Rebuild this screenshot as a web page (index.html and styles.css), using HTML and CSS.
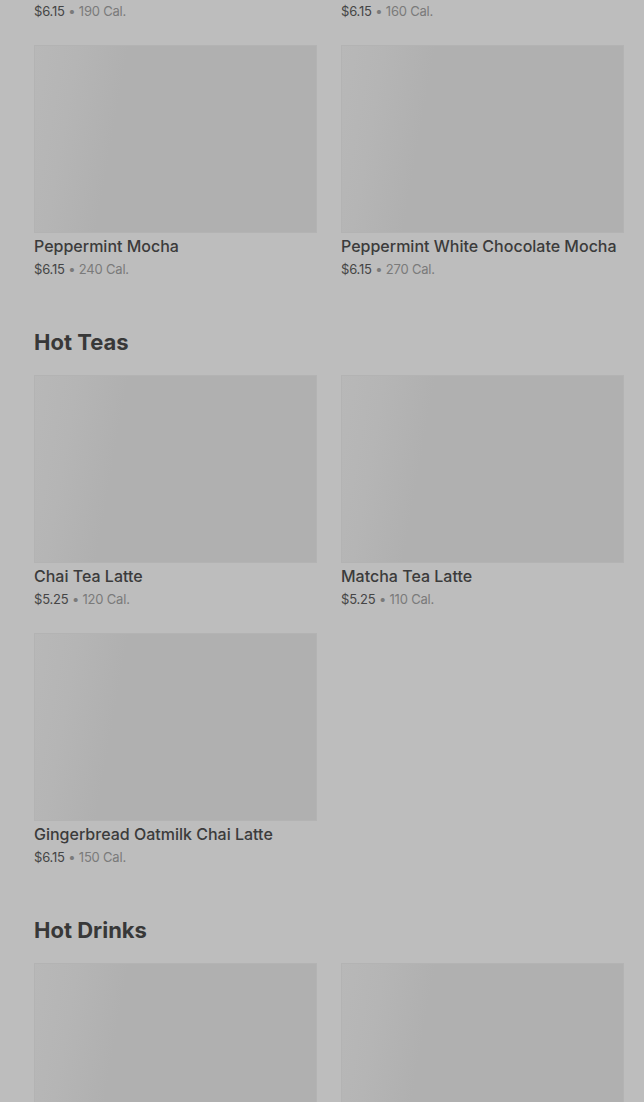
FILE: index.html
```html
<!DOCTYPE html>
<html lang="en">
<head>
<meta charset="utf-8">
<title>Menu</title>
<link rel="stylesheet" href="styles.css">
</head>
<body>
<main class="menu">
  <section class="section section-first">
    <div class="grid">
      <div class="card">
        <div class="thumb"></div>
        <div class="name">Caffè Mocha</div>
        <div class="meta"><span class="price">$6.15</span> • 190 Cal.</div>
      </div>
      <div class="card">
        <div class="thumb"></div>
        <div class="name">White Chocolate Mocha</div>
        <div class="meta"><span class="price">$6.15</span> • 160 Cal.</div>
      </div>
      <div class="card">
        <div class="thumb"></div>
        <div class="name">Peppermint Mocha</div>
        <div class="meta"><span class="price">$6.15</span> • 240 Cal.</div>
      </div>
      <div class="card">
        <div class="thumb"></div>
        <div class="name">Peppermint White Chocolate Mocha</div>
        <div class="meta"><span class="price">$6.15</span> • 270 Cal.</div>
      </div>
    </div>
  </section>

  <section class="section">
    <h2 class="heading">Hot Teas</h2>
    <div class="grid">
      <div class="card">
        <div class="thumb"></div>
        <div class="name">Chai Tea Latte</div>
        <div class="meta"><span class="price">$5.25</span> • 120 Cal.</div>
      </div>
      <div class="card">
        <div class="thumb"></div>
        <div class="name">Matcha Tea Latte</div>
        <div class="meta"><span class="price">$5.25</span> • 110 Cal.</div>
      </div>
      <div class="card">
        <div class="thumb"></div>
        <div class="name">Gingerbread Oatmilk Chai Latte</div>
        <div class="meta"><span class="price">$6.15</span> • 150 Cal.</div>
      </div>
    </div>
  </section>

  <section class="section">
    <h2 class="heading">Hot Drinks</h2>
    <div class="grid">
      <div class="card">
        <div class="thumb"></div>
        <div class="name">Hot Chocolate</div>
        <div class="meta"><span class="price">$4.95</span> • 370 Cal.</div>
      </div>
      <div class="card">
        <div class="thumb"></div>
        <div class="name">Steamed Milk</div>
        <div class="meta"><span class="price">$3.95</span> • 200 Cal.</div>
      </div>
    </div>
  </section>
</main>
</body>
</html>
```

FILE: styles.css
```css
html, body {
  margin: 0;
  padding: 0;
  background: #bdbdbd;
  overflow: hidden;
}

body {
  font-family: Inter, "Liberation Sans", sans-serif;
  color: #3a3a3a;
}

.menu {
  padding: 0 20px 0 34px;
  margin-top: -213px;
}

.section + .section {
  margin-top: 50px;
}

.heading {
  margin: 0 0 19px;
  font-size: 22px;
  line-height: 28px;
  font-weight: 700;
  color: #383838;
}

.grid {
  display: grid;
  grid-template-columns: 283px 283px;
  column-gap: 24px;
  row-gap: 25px;
}

.card {
  display: flex;
  flex-direction: column;
}

.thumb {
  height: 188px;
  background: linear-gradient(100deg, #b8b8b8 0%, #b5b5b5 14%, #b0b0b0 30%, #b0b0b0 100%);
  box-shadow: inset 0 0 0 1px #b3b3b3;
}

.name {
  margin-top: 3px;
  font-size: 16px;
  line-height: 20px;
  font-weight: 500;
  color: #3b3b3b;
  white-space: nowrap;
}

.meta {
  margin-top: 4px;
  font-size: 13px;
  line-height: 18px;
  color: #7a7a7a;
  letter-spacing: -0.2px;
}

.price {
  color: #454545;
}
```
